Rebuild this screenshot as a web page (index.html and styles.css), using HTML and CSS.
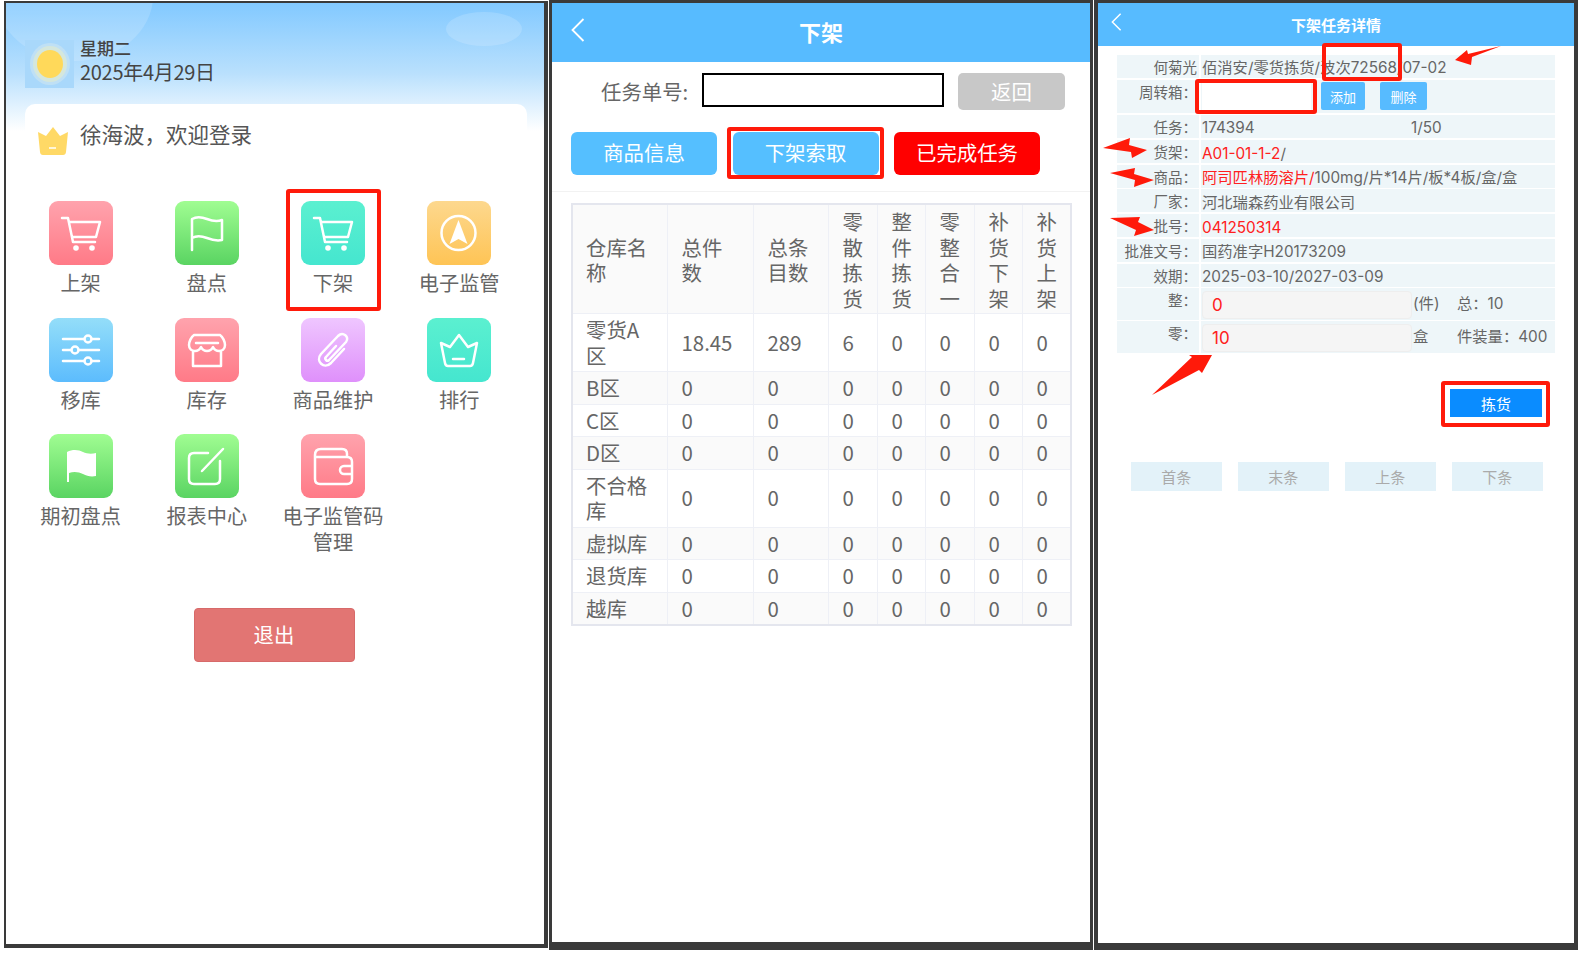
FILE: index.html
```html
<!DOCTYPE html>
<html lang="zh-CN">
<head>
    <meta charset="UTF-8">
    <title>下架操作说明</title>
    <link rel="stylesheet" href="styles.css">
</head>
<body>
<div class="shots">

    <!-- home menu -->
    <section class="panel home">
        <div class="blob blob-left"></div>
        <div class="blob blob-right"></div>
        <div class="weather">
            <div class="sun"><span></span></div>
            <div class="day">
                <div class="weekday">星期二</div>
                <div class="date">2025年4月29日</div>
            </div>
        </div>
        <div class="card">
            <div class="welcome">
                <svg class="crown" viewBox="0 0 32 28"><path d="M16 0l7 9 8-4-2 20q-.3 3-3 3H6q-2.700 0-3-3L1 5l8 4z" fill="#ffd966"/><path d="M12 21h7" stroke="#fff6d8" stroke-width="2"/></svg>
                <span>徐海波，欢迎登录</span>
            </div>
            <div class="menu">
                <div class="item">
                    <div class="tile pink"><svg viewBox="0 0 64 64"><path d="M13 17h6l5 24h22M21 21h30l-4 15H24"/><circle class="dot" cx="27" cy="47" r="2.800"/><circle class="dot" cx="43" cy="47" r="2.800"/></svg></div>
                    <div class="name">上架</div>
                </div>
                <div class="item">
                    <div class="tile green"><svg viewBox="0 0 64 64"><path d="M17 49V18c5-3 10-2 15 0s10 3 15 1v20c-5 1-10 0-15-2s-10-3-15 0"/></svg></div>
                    <div class="name">盘点</div>
                </div>
                <div class="item">
                    <div class="tile teal"><svg viewBox="0 0 64 64"><path d="M13 17h6l5 24h22M21 21h30l-4 15H24"/><circle class="dot" cx="27" cy="47" r="2.800"/><circle class="dot" cx="43" cy="47" r="2.800"/></svg></div>
                    <div class="name">下架</div>
                    <div class="mark mark-menu"></div>
                </div>
                <div class="item">
                    <div class="tile orange"><svg viewBox="0 0 64 64"><circle cx="31.500" cy="32" r="17"/><path class="dot" d="M31.500 19l9 24-9-5-9 5z"/></svg></div>
                    <div class="name">电子监管</div>
                </div>
                <div class="item">
                    <div class="tile blue"><svg viewBox="0 0 64 64"><path d="M14 21h21M43 21h7M14 32h8M30 32h20M14 43h21M43 43h7"/><circle cx="39" cy="21" r="3.500"/><circle cx="26" cy="32" r="3.500"/><circle cx="39" cy="43" r="3.500"/></svg></div>
                    <div class="name">移库</div>
                </div>
                <div class="item">
                    <div class="tile pink"><svg viewBox="0 0 64 64"><path d="M19 17h26c3 2 5 7 5 10 0 4-3 6-6 6-2.500 0-5-2-6-4-1 2-3 4-6 4s-5-2-6-4c-1 2-3 4-6 4s-6-2-6-6c0-3 2-8 5-10zM18 34v14h28V34M21 25h22"/></svg></div>
                    <div class="name">库存</div>
                </div>
                <div class="item">
                    <div class="tile purple"><svg viewBox="0 0 64 64"><path d="M35 28L25 39c-2 2 1 5 3 3l17-18c4-5-3-11-8-6L20 36c-6 7 3 16 10 9l13-14"/></svg></div>
                    <div class="name">商品维护</div>
                </div>
                <div class="item">
                    <div class="tile teal"><svg viewBox="0 0 64 64"><path d="M32 17l9 12 9-4-4 20q-.5 3-3 3H21q-2.500 0-3-3l-4-20 9 4zM26 41h11"/></svg></div>
                    <div class="name">排行</div>
                </div>
                <div class="item">
                    <div class="tile green"><svg viewBox="0 0 64 64"><path class="dot" d="M18 18c6-3 12-2 16 0s9 2 13 1v23c-5 1-9 0-13-2s-9-3-14-1v9h-2z"/></svg></div>
                    <div class="name">期初盘点</div>
                </div>
                <div class="item">
                    <div class="tile green"><svg viewBox="0 0 64 64"><path d="M33 19H19q-5 0-5 5v21q0 5 5 5h21q5 0 5-5V27M27 37l21-22"/></svg></div>
                    <div class="name">报表中心</div>
                </div>
                <div class="item">
                    <div class="tile pink"><svg viewBox="0 0 64 64"><path d="M46 23v-3q0-5-5-5H20q-6 0-6 6v24q0 5 5 5h27q5 0 5-5V28q0-5-5-5H14M51 32h-8a4 4 0 0 0 0 8h8"/></svg></div>
                    <div class="name">电子监管码<br>管理</div>
                </div>
            </div>
            <button class="logout">退出</button>
        </div>
    </section>

    <!-- task list -->
    <section class="panel tasks">
        <header class="bar bar-big">
            <svg class="back" viewBox="0 0 14 24"><path d="M12.500 1L1.500 12l11 11"/></svg>
            下架
        </header>
        <div class="search">
            <label>任务单号:</label>
            <input type="text" class="search-input">
            <button class="return">返回</button>
        </div>
        <div class="tabs">
            <button class="tab">商品信息</button>
            <button class="tab">下架索取<span class="mark mark-tab"></span></button>
            <button class="tab tab-red">已完成任务</button>
        </div>
        <table class="stock">
            <colgroup>
                <col class="c1"><col class="c2"><col class="c3"><col class="c4"><col class="c5"><col class="c4"><col class="c5"><col class="c4">
            </colgroup>
            <tr class="shade head"><td>仓库名称</td><td>总件数</td><td>总条目数</td><td>零散拣货</td><td>整件拣货</td><td>零整合一</td><td>补货下架</td><td>补货上架</td></tr>
            <tr><td>零货A区</td><td>18.45</td><td>289</td><td>6</td><td>0</td><td>0</td><td>0</td><td>0</td></tr>
            <tr class="shade"><td>B区</td><td>0</td><td>0</td><td>0</td><td>0</td><td>0</td><td>0</td><td>0</td></tr>
            <tr><td>C区</td><td>0</td><td>0</td><td>0</td><td>0</td><td>0</td><td>0</td><td>0</td></tr>
            <tr class="shade"><td>D区</td><td>0</td><td>0</td><td>0</td><td>0</td><td>0</td><td>0</td><td>0</td></tr>
            <tr><td>不合格库</td><td>0</td><td>0</td><td>0</td><td>0</td><td>0</td><td>0</td><td>0</td></tr>
            <tr class="shade"><td>虚拟库</td><td>0</td><td>0</td><td>0</td><td>0</td><td>0</td><td>0</td><td>0</td></tr>
            <tr><td>退货库</td><td>0</td><td>0</td><td>0</td><td>0</td><td>0</td><td>0</td><td>0</td></tr>
            <tr class="shade"><td>越库</td><td>0</td><td>0</td><td>0</td><td>0</td><td>0</td><td>0</td><td>0</td></tr>
        </table>
    </section>

    <!-- task detail -->
    <section class="panel detail">
        <header class="bar bar-small">
            <svg class="back back-small" viewBox="0 0 14 24"><path d="M12.500 1L1.500 12l11 11"/></svg>
            下架任务详情
        </header>
        <div class="info">
            <div class="row row-first"><div class="key">何菊光</div><div class="val">佰消安/零货拣货/波次72568/07-02</div></div>
            <div class="row row-box">
                <div class="key">周转箱：</div>
                <div class="val val-flex">
                    <input type="text" class="box-input">
                    <button class="mini">添加</button>
                    <button class="mini mini-del">删除</button>
                </div>
            </div>
            <div class="row"><div class="key">任务：</div><div class="val val-flex"><span class="task-no">174394</span><span>1/50</span></div></div>
            <div class="row"><div class="key">货架：</div><div class="val"><span class="red">A01-01-1-2</span>/</div></div>
            <div class="row"><div class="key">商品：</div><div class="val"><span class="red">阿司匹林肠溶片/</span>100mg/片*14片/板*4板/盒/盒</div></div>
            <div class="row"><div class="key">厂家：</div><div class="val">河北瑞森药业有限公司</div></div>
            <div class="row"><div class="key">批号：</div><div class="val red">041250314</div></div>
            <div class="row"><div class="key">批准文号：</div><div class="val">国药准字H20173209</div></div>
            <div class="row"><div class="key">效期：</div><div class="val">2025-03-10/2027-03-09</div></div>
            <div class="row row-qty">
                <div class="key">整：</div>
                <div class="val val-flex">
                    <input type="text" class="qty" value="0">
                    <span class="unit">(件)</span><span class="total">总：10</span>
                </div>
            </div>
            <div class="row row-qty">
                <div class="key">零：</div>
                <div class="val val-flex">
                    <input type="text" class="qty" value="10">
                    <span class="unit">盒</span><span class="total">件装量：400</span>
                </div>
            </div>
        </div>
        <div class="pick-row"><button class="pick">拣货</button></div>
        <div class="pager">
            <button>首条</button><button>末条</button><button>上条</button><button>下条</button>
        </div>

        <div class="mark mark-batch"></div>
        <div class="mark mark-box"></div>
        <div class="mark mark-pick"></div>
        <svg class="arrows" viewBox="1098 3 476 400">
            <path d="M1455 60l12-10 1 4 33-8-29 11-1 8z"/>
            <path d="M1103 148l27-10-1 7 18 5-15 8-1-6z"/>
            <path d="M1110 173l25-5-1 6 20 6-20 7 1-7z"/>
            <path d="M1110 218l30-1-2 5 16 8-20 6 2-6z"/>
            <path d="M1152 395l40-38-3-2 23 0-10 18-3-3z"/>
        </svg>
    </section>
</div>
</body>
</html>
```

FILE: styles.css
```css
* {
    box-sizing: border-box;
}
body {
    margin: 0;
    background: #fff;
    font-family: "Noto Sans CJK SC", "Noto Sans", sans-serif;
    color: #666;
}
button, input {
    font-family: inherit;
    border: none;
    padding: 0;
    outline: none;
}
.shots {
    display: flex;
    align-items: flex-start;
    gap: 1px;
    padding-left: 4px;
}
.panel {
    position: relative;
    border: solid #3a3a3a;
    background: #fff;
    overflow: hidden;
}
.mark {
    position: absolute;
    border: 4px solid #ff1a0a;
    border-radius: 3px;
    pointer-events: none;
}

/* home */
.home {
    width: 544px;
    height: 947px;
    margin-top: 1px;
    border-width: 2px 4px 4px 2px;
    padding: 37px 17px 0 19px;
    background: linear-gradient(#82c9ff 0, #b9e0fd 70px, #fff 128px) no-repeat;
}
.blob {
    position: absolute;
    border-radius: 50%;
    background: rgba(255, 255, 255, 0.16);
}
.blob-left {
    left: -10px;
    top: -72px;
    width: 157px;
    height: 130px;
}
.blob-right {
    left: 440px;
    top: 9px;
    width: 76px;
    height: 34px;
}
.weather {
    position: relative;
    display: flex;
    gap: 6px;
    height: 48px;
}
.day {
    margin-top: -2px;
}
.sun {
    display: flex;
    align-items: center;
    justify-content: center;
    width: 49px;
    height: 48px;
    background: #a9d8fb;
}
.sun span {
    width: 26px;
    height: 28px;
    border-radius: 50%;
    background: #ffd95a;
    box-shadow: 0 0 0 4px #d5e7dc, 0 0 0 7px #bfe0f5;
}
.weekday {
    font-size: 17px;
    line-height: 20px;
    font-weight: 500;
    color: #444;
}
.date {
    font-size: 20px;
    line-height: 28px;
    letter-spacing: -0.3px;
    color: #444;
}
.card {
    position: relative;
    display: flex;
    flex-direction: column;
    height: 600px;
    margin-top: 16px;
    background: #fff;
    border-radius: 10px 10px 0 0;
}
.welcome {
    display: flex;
    align-items: flex-start;
    gap: 11px;
    height: 97px;
    padding: 16px 0 0 12px;
    font-size: 21.500px;
    line-height: 28px;
    color: #555;
}
.crown {
    width: 32px;
    height: 28px;
    margin-top: 7px;
}
.menu {
    display: grid;
    grid-template-columns: repeat(4, 126.200px);
    row-gap: 20.500px;
    margin-left: -7.500px;
}
.item {
    position: relative;
    display: flex;
    flex-direction: column;
    align-items: center;
}
.tile {
    width: 64px;
    height: 64px;
    border-radius: 9px;
}
.tile svg {
    display: block;
    width: 64px;
    height: 64px;
    fill: none;
    stroke: #fff;
    stroke-width: 2.500;
    stroke-linecap: round;
    stroke-linejoin: round;
}
.tile .dot {
    fill: #fff;
    stroke: none;
}
.pink { background: linear-gradient(#ffa3ad, #ff7a87); }
.green { background: linear-gradient(#a0fd92, #5ad462); }
.teal { background: linear-gradient(#5bf0d0, #45e6cf); }
.orange { background: linear-gradient(#fdd88e, #fec455); }
.blue { background: linear-gradient(#94def9, #5cbcfd); }
.purple { background: linear-gradient(#efc6ff, #df90fb); }
.name {
    margin-top: 5px;
    padding-bottom: 1px;
    font-size: 20.200px;
    line-height: 26px;
    text-align: center;
    color: #666;
}
.mark-menu {
    top: -12px;
    left: 16px;
    right: 15px;
    bottom: -14px;
}
.logout {
    align-self: center;
    width: 161px;
    height: 54px;
    margin: 52px 4px 0 0;
    padding-bottom: 2px;
    border: 1px solid #d76a6a;
    border-radius: 4px;
    background: #e27573;
    color: #fff;
    font-size: 20.400px;
}

/* header bar */
.bar {
    position: relative;
    display: flex;
    align-items: center;
    justify-content: center;
    background: #57bbff;
    color: #fff;
    font-weight: 700;
}
.bar-big {
    height: 59px;
    padding-bottom: 3px;
    font-size: 22px;
}
.bar-small {
    height: 43px;
    font-size: 15px;
}
.back {
    position: absolute;
    left: 19px;
    top: 15px;
    width: 14px;
    height: 24px;
    fill: none;
    stroke: #fff;
    stroke-width: 1.800;
}
.back-small {
    left: 13px;
    top: 10px;
    width: 11px;
    height: 18px;
    stroke-width: 2;
}

/* task list */
.tasks {
    width: 544px;
    height: 950px;
    border-width: 3px;
    border-bottom-width: 8px;
}
.search {
    display: flex;
    align-items: flex-start;
    margin-top: 11px;
    padding-left: 49px;
    font-size: 20.400px;
}
.search label {
    width: 101px;
    line-height: 36px;
}
.search-input {
    width: 242px;
    height: 34px;
    margin-right: 14px;
    border: 2px solid #000;
    background: #fff;
}
.return {
    width: 107px;
    height: 37px;
    padding-bottom: 2px;
    border-radius: 5px;
    background: #c8c8c8;
    color: #fff;
    font-size: 20.400px;
}
.tabs {
    display: flex;
    gap: 15.500px;
    margin-top: 22px;
    padding: 0 0 16px 19px;
    border-bottom: 1px solid #f2f2f2;
}
.tab {
    position: relative;
    width: 146px;
    height: 43px;
    padding-bottom: 3px;
    border-radius: 6px;
    background: #55bfff;
    color: #fff;
    font-size: 20.400px;
}
.tab-red {
    background: #f00;
}
.mark-tab {
    top: -5px;
    left: -6px;
    right: -5px;
    bottom: -4px;
}
.stock {
    width: 500px;
    margin: 11px 0 0 19px;
    border-collapse: collapse;
    border: 2px solid #e4e6ee;
    table-layout: fixed;
    font-size: 20.400px;
    line-height: 25.500px;
}
.stock td {
    padding: 3px 14px;
    border: 1px solid #eef0f6;
}
.stock td:first-child {
    padding-left: 13px;
}
.stock .head td {
    padding-top: 4px;
    padding-bottom: 2px;
}
.shade {
    background: #fafafa;
}
.c1 { width: 95px; }
.c2 { width: 86px; }
.c3 { width: 75px; }
.c4 { width: 49px; }
.c5 { width: 48px; }

/* task detail */
.detail {
    width: 484px;
    height: 950px;
    border-width: 3px 4px 7px;
}
.info {
    margin: 9px 19px 0 19px;
    line-height: 23px;
}
.row {
    display: flex;
    gap: 2px;
    height: 23px;
    margin-bottom: 1.700px;
}
.key, .val {
    background: #eef6f9;
}
.key {
    flex: none;
    width: 82px;
    padding-right: 2px;
    font-size: 14.500px;
    text-align: right;
}
.val {
    flex: 1;
    padding: 1.500px 0 0 1px;
    font-family: Inter, "Noto Sans CJK SC", sans-serif;
    font-size: 15.300px;
    white-space: nowrap;
}
.val-flex {
    display: flex;
    align-items: center;
}
.row-first .val {
    padding-top: 0.500px;
}
.row-box {
    height: 33px;
    margin-bottom: 2.700px;
}
.row-box .val {
    padding-top: 0;
}
.box-input {
    width: 109px;
    height: 27px;
    margin-right: 10px;
    background: #fff;
}
.mini {
    width: 44px;
    height: 28px;
    margin-right: 15px;
    border-radius: 2px;
    background: #57bbff;
    color: #fff;
    font-size: 13px;
}
.mini-del {
    width: 47px;
}
.task-no {
    width: 209px;
}
.row-qty {
    height: 32px;
    margin-bottom: 1px;
}
.qty {
    width: 210px;
    height: 28px;
    padding-left: 9px;
    border: 1px solid #eee;
    border-radius: 4px;
    background: #f5f5f5;
    color: #ff2020;
    font-family: inherit;
    font-size: 17px;
}
.unit {
    width: 44px;
    margin-left: 1px;
    padding-bottom: 3px;
}
.total {
    padding-bottom: 3px;
}
.red {
    color: #ff2020;
}
.pick-row {
    display: flex;
    justify-content: flex-end;
    margin-top: 36px;
    padding-right: 32px;
}
.pick {
    width: 92px;
    height: 28px;
    background: #0a8cff;
    color: #fff;
    font-size: 15px;
}
.pager {
    display: flex;
    gap: 16.500px;
    margin-top: 45px;
    padding-left: 33px;
}
.pager button {
    width: 90.500px;
    height: 29px;
    background: #e3f2f9;
    color: #aaa;
    font-size: 15px;
}
.mark-batch {
    left: 224px;
    top: 40px;
    width: 80px;
    height: 38px;
}
.mark-box {
    left: 97px;
    top: 76px;
    width: 122px;
    height: 35px;
}
.mark-pick {
    left: 343px;
    top: 378px;
    width: 109px;
    height: 46px;
}
.arrows {
    position: absolute;
    left: 0;
    top: 0;
    width: 476px;
    height: 400px;
    fill: #ff1a0a;
}
```
